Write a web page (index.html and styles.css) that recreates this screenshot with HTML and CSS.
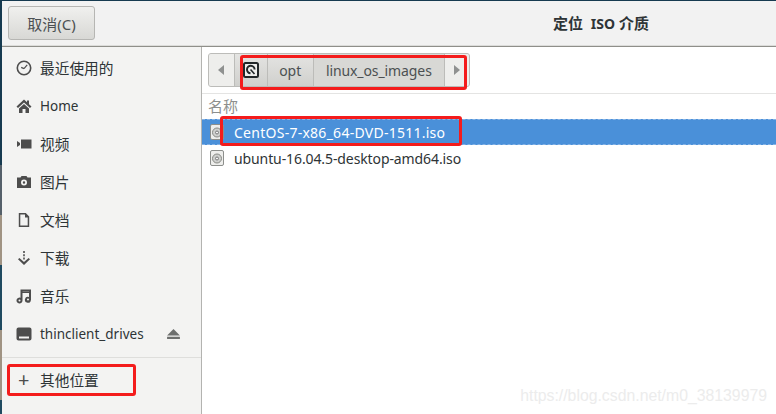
FILE: index.html
```html
<!DOCTYPE html>
<html lang="zh-CN">
<head>
    <meta charset="UTF-8">
    <meta name="viewport" content="width=device-width, initial-scale=1.0">
    <title>定位 ISO 介质</title>
    <link rel="stylesheet" href="styles.css">
</head>
<body>
    <div class="dialog">
        <header class="titlebar">
            <button class="cancel-btn">取消(C)</button>
            <h1 class="title">定位&nbsp; <span class="title-latin">ISO</span> 介质</h1>
        </header>

        <div class="content">
            <aside class="sidebar">
                <ul class="places">
                    <li class="place">
                        <svg class="place-icon" viewBox="0 0 16 16"><circle cx="8" cy="8" r="6.7" fill="none" stroke="#4d4d4d" stroke-width="1.6"/><path d="M8 8.6 11.2 4.8M8 8.6 5.2 7.4" fill="none" stroke="#4d4d4d" stroke-width="1.2"/></svg>
                        <span class="zh">最近使用的</span>
                    </li>
                    <li class="place">
                        <svg class="place-icon" viewBox="0 0 16 16"><path d="M8 1.5.5 8.500 2 10 8 4.500 14 10l1.500-1.500L13 6.200V2.500h-2v1.800zM3 10.500 8 6l5 4.500V15H9.500v-4h-3v4H3z" fill="#4d4d4d"/></svg>
                        <span>Home</span>
                    </li>
                    <li class="place">
                        <svg class="place-icon" viewBox="0 0 16 16"><path d="M5 3.500h10.500v9H5zM1 5l3 2v2l-3 2z" fill="#4d4d4d"/></svg>
                        <span class="zh">视频</span>
                    </li>
                    <li class="place">
                        <svg class="place-icon" viewBox="0 0 16 16"><path fill-rule="evenodd" d="M1 3.500h3.500L5.500 2h5l1 1.500H15V14H1zM8 5.500a3 3 0 1 0 0 6 3 3 0 0 0 0-6zM8 7.300a1.200 1.200 0 1 1 0 2.400 1.200 1.200 0 0 1 0-2.400z" fill="#4d4d4d"/></svg>
                        <span class="zh">图片</span>
                    </li>
                    <li class="place">
                        <svg class="place-icon" viewBox="0 0 16 16"><path d="M2.800 1h7l3.400 3.600V15H2.800zM4.300 2.500v11h7.400V5.400H9V2.500z" fill="#4d4d4d" fill-rule="evenodd"/></svg>
                        <span class="zh">文档</span>
                    </li>
                    <li class="place">
                        <svg class="place-icon" viewBox="0 0 16 16"><path d="M7.200 1h1.600v2H7.200zM7.200 4.200h1.600v2H7.200zM7.200 7.400h1.600v2H7.200zM2 9.200l1.400-1.200L8 12l4.600-4L14 9.200 8 15z" fill="#4d4d4d"/></svg>
                        <span class="zh">下载</span>
                    </li>
                    <li class="place">
                        <svg class="place-icon" viewBox="0 0 16 16"><path fill-rule="evenodd" d="M4.500 1.500H15V12h-.1a3 3 0 1 1-1.900-3V5H6.500v7.500a3 3 0 1 1-2-2.800zM3.500 11.500a1 1 0 1 0 0 2 1 1 0 0 0 0-2zM12 10.500a1 1 0 1 0 0 2 1 1 0 0 0 0-2zM6.500 3.200V3.500H13v-.300z" fill="#4d4d4d"/></svg>
                        <span class="zh">音乐</span>
                    </li>
                    <li class="place">
                        <svg class="place-icon" viewBox="0 0 16 16"><path fill-rule="evenodd" d="M2.500 1.500h11A2 2 0 0 1 15.500 3.500v9a2 2 0 0 1-2 2h-11a2 2 0 0 1-2-2v-9a2 2 0 0 1 2-2zM3 10.500v2h10v-2z" fill="#4d4d4d"/></svg>
                        <span class="place-name">thinclient_drives</span>
                        <svg class="eject-icon" viewBox="0 0 14 12"><path d="M7 0 14 7H0zM0 8.500h14V11H0z" fill="#6d6f6e"/></svg>
                    </li>
                </ul>
                <div class="other-places">
                    <span class="plus">+</span>
                    <span class="zh">其他位置</span>
                </div>
            </aside>

            <main class="browser">
                <div class="path-row">
                    <nav class="pathbar">
                        <span class="path-arrow arrow-left"></span>
                        <span class="path-item path-disk">
                            <svg class="disk-icon" viewBox="0 0 16 16"><rect x="1" y="1" width="14" height="14" rx="1.500" fill="#eeeeec" stroke="#222729" stroke-width="2"/><path d="M7.500 11.300A3.800 3.800 0 1 1 11.600 7.500" fill="none" stroke="#222729" stroke-width="2"/><path d="M7.500 7.500 11.500 12" fill="none" stroke="#222729" stroke-width="1.600"/></svg>
                        </span>
                        <span class="path-item path-opt">opt</span>
                        <span class="path-item path-current">linux_os_images</span>
                        <span class="path-arrow arrow-right"></span>
                    </nav>
                </div>
                <div class="list-head">名称</div>
                <div class="file-row selected">
                    <svg class="iso-icon" viewBox="0 0 14 16"><rect x=".5" y=".5" width="13" height="15" rx="1.500" fill="#eeeeec" stroke="#8d8f8c"/><circle cx="7" cy="8.500" r="4.500" fill="#cfd0ce" stroke="#888a85"/><circle cx="7" cy="8.500" r="1.500" fill="#f5f5f5" stroke="#777"/></svg>
                    <span class="file-centos">CentOS-7-x86_64-DVD-1511.iso</span>
                </div>
                <div class="file-row">
                    <svg class="iso-icon" viewBox="0 0 14 16"><rect x=".5" y=".5" width="13" height="15" rx="1.500" fill="#eeeeec" stroke="#8d8f8c"/><circle cx="7" cy="8.500" r="4.500" fill="#cfd0ce" stroke="#888a85"/><circle cx="7" cy="8.500" r="1.500" fill="#f5f5f5" stroke="#777"/></svg>
                    <span>ubuntu-16.04.5-desktop-amd64.iso</span>
                </div>
            </main>
        </div>
    </div>

    <!-- 标注框 -->
    <div class="mark mark-path"></div>
    <div class="mark mark-file"></div>
    <div class="mark mark-other"></div>
    <div class="watermark">https://blog.csdn.net/m0_38139979</div>
</body>
</html>
```

FILE: styles.css
```css
* {
    margin: 0;
    padding: 0;
    box-sizing: border-box;
}

body {
    width: 776px;
    height: 414px;
    overflow: hidden;
    padding: 1px 0 0 2px;
    font-family: "Noto Sans", "Noto Sans CJK SC", sans-serif;
    font-size: 13.5px;
    color: #2e3436;
    background: linear-gradient(to bottom,
        #163a50 0, #163a50 165px,
        #55606a 165px, #55606a 215px,
        #a09383 215px, #a09383 265px,
        #1f4a60 265px, #1f4a60 330px,
        #a09383 330px, #a09383 400px,
        #1f4a60 400px);
    position: relative;
}

.zh {
    font-size: 14.7px;
    line-height: 20px;
}

.dialog {
    width: 774px;
    height: 413px;
    display: flex;
    flex-direction: column;
    background-color: #fff;
}

.titlebar {
    height: 46px;
    flex-shrink: 0;
    display: flex;
    align-items: center;
    padding: 0 6px;
    background-color: #f2f2f2;
    border-bottom: 1px solid #8f8f8a;
    box-shadow: inset 0 -1px 0 #dcdcda;
    position: relative;
}

.cancel-btn {
    width: 87px;
    height: 34px;
    margin-bottom: 1px;
    font-family: inherit;
    font-size: 15px;
    color: #4c5052;
    border: 1px solid #b6b6b3;
    border-radius: 3px;
    background: linear-gradient(to bottom, #f0f0ee, #d8d8d5);
}

.title {
    position: absolute;
    left: 551px;
    top: 12px;
    font-size: 15px;
    line-height: 20px;
    font-weight: bold;
    color: #2e3436;
    white-space: nowrap;
}

.title-latin {
    font-size: 14px;
}

.content {
    flex: 1;
    display: flex;
    min-height: 0;
}

.sidebar {
    width: 200px;
    flex-shrink: 0;
    padding-top: 2px;
    background-color: #f3f3f2;
    border-right: 1px solid #b3b3b0;
}

.places {
    list-style: none;
    padding-bottom: 4px;
    border-bottom: 1px solid #dededc;
}

.place {
    height: 38px;
    display: flex;
    align-items: center;
    padding: 0 14px;
    color: #2e3436;
}

.place-icon {
    width: 16px;
    height: 16px;
    margin-right: 8px;
    flex-shrink: 0;
}

.place-name {
    flex: 1;
}

.eject-icon {
    width: 13px;
    height: 11px;
    margin-right: 7px;
}

.other-places {
    height: 44px;
    display: flex;
    align-items: center;
    padding: 0 0 0 15px;
}

.plus {
    width: 16px;
    margin-right: 7px;
    padding-left: 1px;
    font-size: 20px;
    line-height: 20px;
    color: #4d4d4d;
}

.browser {
    flex: 1;
    min-width: 0;
    background-color: #fff;
}

.path-row {
    height: 47px;
    padding: 6px 0 0 6px;
    border-bottom: 1px solid #e4e4e3;
}

.pathbar {
    width: 262px;
    height: 34px;
    display: flex;
    background-color: #d8d8d5;
    border: 1px solid #bcbcb9;
    border-radius: 3px;
    overflow: hidden;
}

.path-arrow {
    width: 26px;
    display: flex;
    align-items: center;
    justify-content: center;
    background-color: #eeeeec;
}

.path-arrow::before {
    content: "";
    border-top: 5px solid transparent;
    border-bottom: 5px solid transparent;
}

.arrow-left {
    border-right: 1px solid #bcbcb9;
}

.arrow-left::before {
    border-right: 6px solid #8f9190;
}

.arrow-right {
    width: 25px;
    border-left: 1px solid #bcbcb9;
}

.arrow-right::before {
    border-left: 6px solid #8f9190;
}

.path-item {
    display: flex;
    align-items: center;
    justify-content: center;
    font-size: 14px;
    color: #4c5052;
    border-right: 1px solid #bcbcb9;
}

.path-disk {
    width: 33px;
    background: linear-gradient(to bottom, #e4e4e2, #d0d0cd);
}

.path-opt {
    width: 46px;
    background: linear-gradient(to bottom, #e4e4e2, #d0d0cd);
}

.path-current {
    width: 131px;
    letter-spacing: -0.1px;
    border-right: none;
}

.disk-icon {
    width: 16px;
    height: 16px;
}

.list-head {
    height: 25px;
    padding: 2px 0 0 6px;
    font-size: 15px;
    line-height: 20px;
    color: #8d8f8d;
}

.file-row {
    height: 26px;
    display: flex;
    align-items: center;
    padding-left: 8px;
    font-size: 14px;
    letter-spacing: -0.1px;
    color: #2e3436;
}

.file-row.selected {
    color: #fff;
    background-color: #4a90d9;
    border-top: 1px dashed #86b3e5;
    border-bottom: 1px dashed #86b3e5;
}

.file-centos {
    letter-spacing: 0.26px;
}

.iso-icon {
    width: 14px;
    height: 16px;
    margin-right: 10px;
    flex-shrink: 0;
}

.mark {
    position: absolute;
    border: 3px solid #f41c1c;
    border-radius: 3px;
}

.mark-path {
    left: 240px;
    top: 55px;
    width: 227px;
    height: 35px;
}

.mark-file {
    left: 220px;
    top: 116px;
    width: 242px;
    height: 30px;
}

.mark-other {
    left: 7px;
    top: 364px;
    width: 129px;
    height: 32px;
}

.watermark {
    position: absolute;
    right: 9px;
    top: 387px;
    font-family: "Liberation Sans", sans-serif;
    font-size: 15.8px;
    line-height: 18px;
    color: #ececec;
}
```
